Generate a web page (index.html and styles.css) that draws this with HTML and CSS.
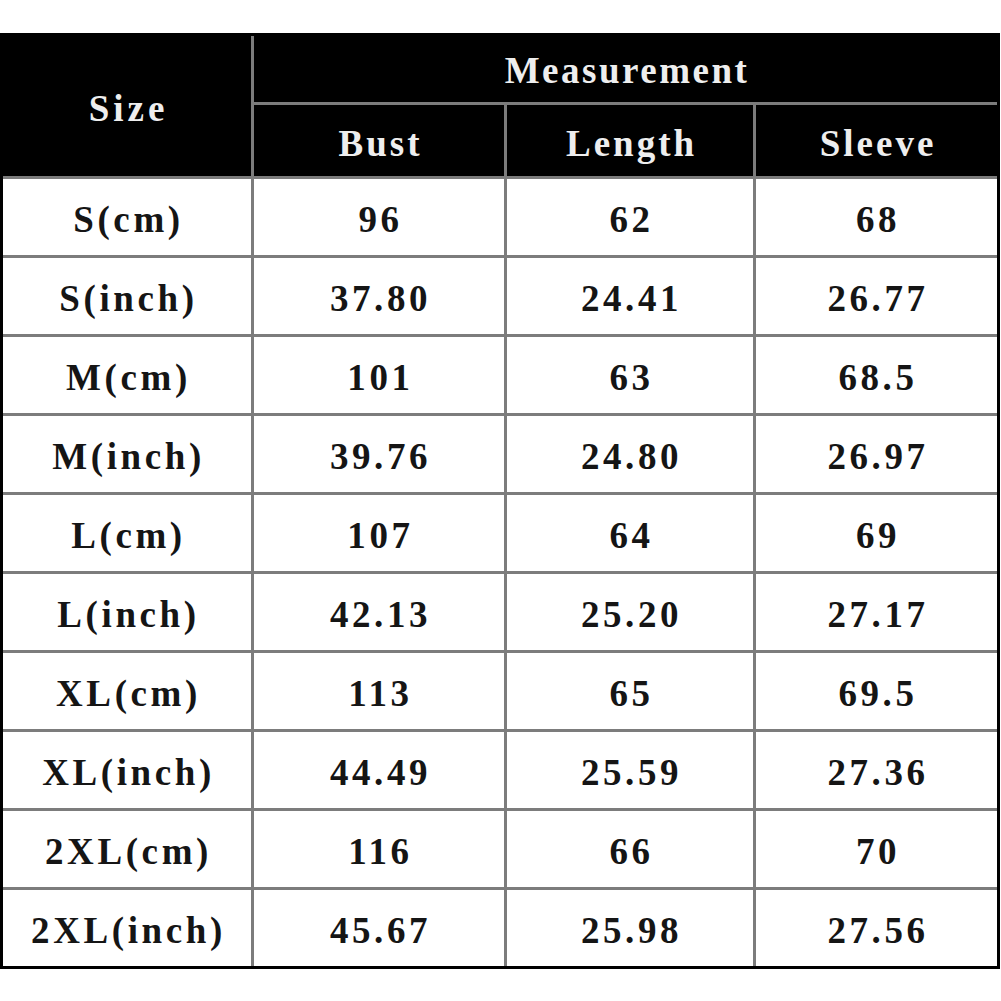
FILE: index.html
```html
<!DOCTYPE html>
<html lang="en">
<head>
<meta charset="utf-8">
<title>Size Chart</title>
<link rel="stylesheet" href="styles.css">
</head>
<body>
<div class="chart">
  <div class="cell head size">Size</div>
  <div class="cell head measure">Measurement</div>
  <div class="cell head sub">Bust</div>
  <div class="cell head sub">Length</div>
  <div class="cell head sub">Sleeve</div>

  <div class="cell">S(cm)</div><div class="cell">96</div><div class="cell">62</div><div class="cell">68</div>
  <div class="cell">S(inch)</div><div class="cell">37.80</div><div class="cell">24.41</div><div class="cell">26.77</div>
  <div class="cell">M(cm)</div><div class="cell">101</div><div class="cell">63</div><div class="cell">68.5</div>
  <div class="cell">M(inch)</div><div class="cell">39.76</div><div class="cell">24.80</div><div class="cell">26.97</div>
  <div class="cell">L(cm)</div><div class="cell">107</div><div class="cell">64</div><div class="cell">69</div>
  <div class="cell">L(inch)</div><div class="cell">42.13</div><div class="cell">25.20</div><div class="cell">27.17</div>
  <div class="cell">XL(cm)</div><div class="cell">113</div><div class="cell">65</div><div class="cell">69.5</div>
  <div class="cell">XL(inch)</div><div class="cell">44.49</div><div class="cell">25.59</div><div class="cell">27.36</div>
  <div class="cell">2XL(cm)</div><div class="cell">116</div><div class="cell">66</div><div class="cell">70</div>
  <div class="cell">2XL(inch)</div><div class="cell">45.67</div><div class="cell">25.98</div><div class="cell">27.56</div>
</div>
</body>
</html>
```
FILE: styles.css
```css
html, body {
  margin: 0;
  padding: 0;
  background: #ffffff;
}

body {
  padding-top: 33px;
}

.chart {
  width: 1000px;
  box-sizing: border-box;
  border: 3px solid #000000;
  background: #7c7c7c;
  display: grid;
  grid-template-columns: 248px 250px 246px 241px;
  grid-template-rows: 66px 71px repeat(10, 76px);
  gap: 3px;
  font-family: "Liberation Serif", "Times New Roman", serif;
  font-weight: bold;
  font-size: 37px;
  letter-spacing: 3.6px;
  color: #151515;
}

.cell {
  background: #ffffff;
  display: flex;
  align-items: center;
  justify-content: center;
  padding: 5px 0 0 3px;
  white-space: nowrap;
}

.head {
  background: #000000;
  color: #eeeeee;
}

.sub {
  letter-spacing: 3px;
}

.size {
  grid-row: 1 / span 2;
  grid-column: 1;
  letter-spacing: 4px;
}

.measure {
  grid-column: 2 / span 3;
  padding-top: 3px;
  letter-spacing: 2.5px;
}
```
